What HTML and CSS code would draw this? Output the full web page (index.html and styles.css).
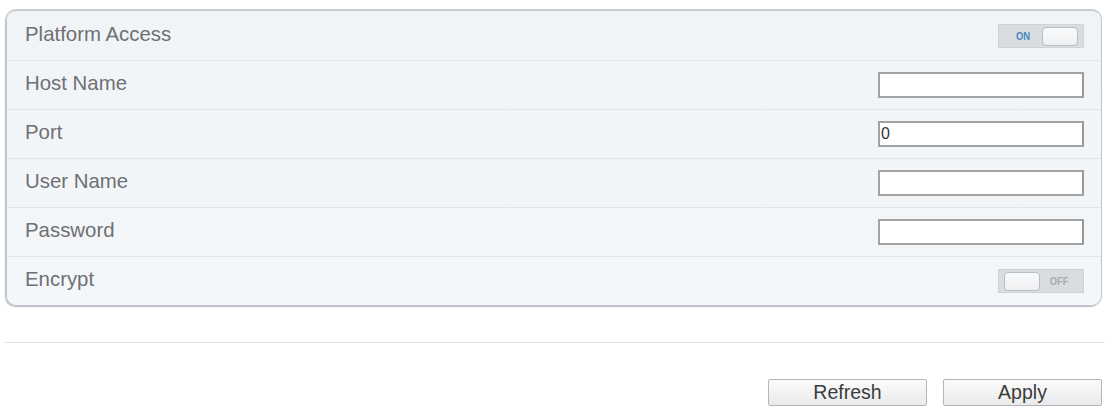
FILE: index.html
```html
<!DOCTYPE html>
<html>
<head>
<meta charset="utf-8">
<link rel="stylesheet" href="styles.css">
</head>
<body>
<div class="page">
  <div class="panel">
    <div class="row">
      <span class="label">Platform Access</span>
      <div class="toggle on"><span class="tx">ON</span><span class="knob"></span></div>
    </div>
    <div class="row">
      <span class="label">Host Name</span>
      <input class="field" type="text" value="">
    </div>
    <div class="row">
      <span class="label">Port</span>
      <input class="field" type="text" value="0">
    </div>
    <div class="row">
      <span class="label">User Name</span>
      <input class="field" type="text" value="">
    </div>
    <div class="row">
      <span class="label">Password</span>
      <input class="field" type="password" value="">
    </div>
    <div class="row last">
      <span class="label">Encrypt</span>
      <div class="toggle off"><span class="knob"></span><span class="tx">OFF</span></div>
    </div>
  </div>
  <div class="divider"></div>
  <div class="actions">
    <button class="btn">Refresh</button>
    <button class="btn">Apply</button>
  </div>
</div>
</body>
</html>
```
FILE: styles.css
```css
html, body {
  margin: 0;
  padding: 0;
  background: #ffffff;
}
body {
  font-family: "Liberation Sans", Arial, sans-serif;
  width: 1109px;
  height: 412px;
  overflow: hidden;
}
.page {
  padding: 9px 7px 0 6px;
}
.panel {
  border: 1px solid #c3c6cc;
  border-top: 2px solid #c8cad2;
  border-radius: 10px;
  background: linear-gradient(#f1f4f7, #f4f7fa);
  box-shadow: -1px 1px 1px #b9bcc2;
  padding-top: 1px;
}
.row {
  height: 48px;
  border-bottom: 1px solid #e2e5e9;
  display: flex;
  align-items: center;
  justify-content: space-between;
  padding: 0 17px 0 18px;
}
.row.last {
  border-bottom: none;
}
.label {
  font-size: 20.4px;
  color: #6e7073;
  position: relative;
  top: -2px;
}
.field {
  box-sizing: border-box;
  width: 206px;
  height: 26px;
  border: 2px solid #a3a3a3;
  border-right-color: #9a9a9a;
  background: #fff;
  margin: 0;
  padding: 0 0 0 1px;
  font-family: "Liberation Sans", Arial, sans-serif;
  font-size: 16px;
  color: #333;
  outline: none;
}
.toggle {
  box-sizing: border-box;
  width: 86px;
  height: 24px;
  background: #d9dce0;
  border: 1px solid #cfd2d6;
  display: flex;
  align-items: center;
  padding: 0 5px;
}
.toggle .knob {
  width: 34px;
  height: 17px;
  background: linear-gradient(#f9fafb, #eef0f2);
  border: 1px solid #b9bcc0;
  border-radius: 4px;
}
.toggle .tx {
  flex: 1;
  text-align: center;
  font-size: 11px;
  font-weight: bold;
  transform: scaleX(0.85);
}
.toggle.on .tx {
  color: #4a86c5;
}
.toggle.off .tx {
  color: #a8abaf;
}
.divider {
  margin: 36px -3px 0 -2px;
  height: 1px;
  background: #e3e4e6;
}
.actions {
  display: flex;
  justify-content: flex-end;
  gap: 16px;
  padding-top: 36px;
}
.btn {
  box-sizing: border-box;
  width: 159px;
  height: 27px;
  border: 1px solid #b3b5b8;
  border-radius: 2px;
  background: linear-gradient(#fbfbfb, #e9eaeb);
  font-family: "Liberation Sans", Arial, sans-serif;
  font-size: 19.5px;
  color: #3c3c3c;
  padding: 0;
  line-height: 25px;
}
```
